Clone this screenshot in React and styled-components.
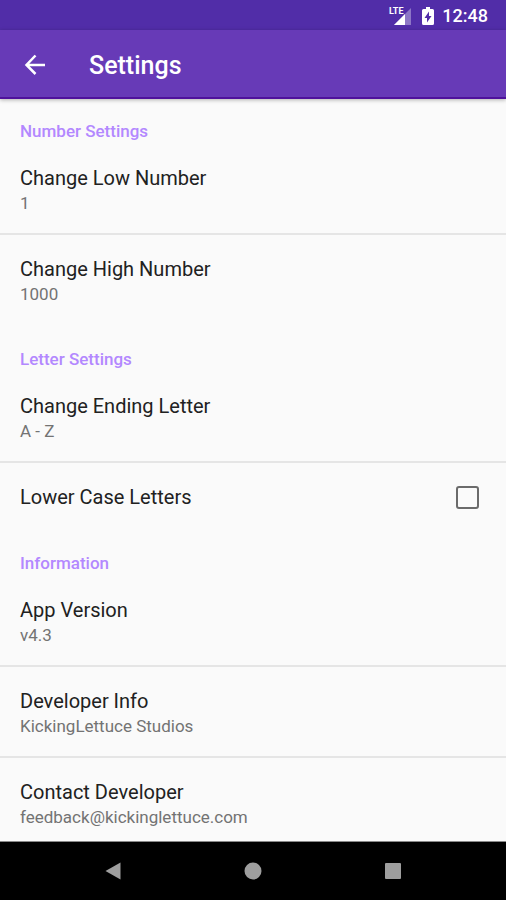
import React from "react";
import styled, { createGlobalStyle } from "styled-components";

const GlobalStyle = createGlobalStyle`
  *, *::before, *::after { box-sizing: border-box; }
  body {
    margin: 0;
    background: #fafafa;
    font-family: Roboto, "Liberation Sans", sans-serif;
  }
`;

const Screen = styled.div`
  height: 100vh;
  display: flex;
  flex-direction: column;
  background: #fafafa;
`;

const StatusBar = styled.div`
  display: flex;
  flex-shrink: 0;
  align-items: center;
  justify-content: flex-end;
  height: 30px;
  padding: 2px 18px 0 0;
  background: #512da8;
  color: #fff;
`;

const SignalIcon = styled.svg`
  width: 24px;
  height: 20px;
  margin-right: 10px;
`;

const BatteryIcon = styled.svg`
  width: 12px;
  height: 20px;
  margin-right: 8px;
`;

const Clock = styled.time`
  font-size: 18px;
  line-height: 20px;
  font-weight: 500;
`;

const Toolbar = styled.header`
  display: flex;
  flex-shrink: 0;
  align-items: center;
  height: 69px;
  padding: 2px 20px 0;
  background: #673ab7;
  border-bottom: 2px solid #4f129c;
  box-shadow: 0 1px 4px rgba(0, 0, 0, 0.3);
`;

const BackButton = styled.button`
  display: flex;
  width: 30px;
  height: 30px;
  margin-right: 39px;
  padding: 0;
  border: 0;
  background: none;
  color: #fff;
  cursor: pointer;
`;

const ScreenTitle = styled.h1`
  margin: 0;
  padding-top: 3px;
  color: #fff;
  font-size: 25px;
  line-height: 30px;
  font-weight: 500;
`;

const Content = styled.main`
  flex: 1;
  min-height: 0;
  overflow-y: auto;
  scrollbar-width: none;
`;

const SectionTitle = styled.h2`
  margin: 0;
  padding: 20px 20px 0;
  color: #b388ff;
  font-size: 17px;
  line-height: 24px;
  font-weight: 500;
`;

const List = styled.ul`
  margin: 0;
  padding: 0 0 3px;
  list-style: none;
`;

const Item = styled.li`
  & + & {
    border-top: 2px solid #e5e5e5;
  }
  & + & > * {
    padding-top: 21px;
  }
`;

const Preference = styled.button`
  display: block;
  width: 100%;
  padding: 22px 20px 18px;
  border: 0;
  background: none;
  font-family: inherit;
  text-align: left;
  cursor: pointer;
`;

const CheckPreference = styled.label`
  display: flex;
  align-items: center;
  justify-content: space-between;
  padding: 22px 27px 18px 20px;
  cursor: pointer;
`;

const Name = styled.span`
  display: block;
  color: #212121;
  font-size: 20px;
  line-height: 26px;
`;

const Value = styled.span`
  display: block;
  color: #737373;
  font-size: 17px;
  line-height: 24px;
`;

const Checkbox = styled.input`
  appearance: none;
  width: 23px;
  height: 23px;
  margin: 0;
  border: 2px solid #6b6b6b;
  border-radius: 3px;
  cursor: pointer;

  &:checked {
    background: #b388ff;
  }
`;

const NavBar = styled.nav`
  display: grid;
  flex-shrink: 0;
  grid-template-columns: repeat(3, 1fr);
  height: 59px;
  padding: 0 43px;
  border-top: 1px solid #8a8a8a;
  background: #000;
`;

const NavButton = styled.button`
  display: flex;
  align-items: center;
  justify-content: center;
  padding: 0;
  border: 0;
  background: none;
  color: #9e9e9e;
  cursor: pointer;
`;

const sections = [
  {
    title: "Number Settings",
    items: [
      { name: "Change Low Number", value: "1" },
      { name: "Change High Number", value: "1000" },
    ],
  },
  {
    title: "Letter Settings",
    items: [
      { name: "Change Ending Letter", value: "A - Z" },
      { name: "Lower Case Letters", checkbox: true },
    ],
  },
  {
    title: "Information",
    items: [
      { name: "App Version", value: "v4.3" },
      { name: "Developer Info", value: "KickingLettuce Studios" },
      { name: "Contact Developer", value: "feedback@kickinglettuce.com" },
    ],
  },
];

function PreferenceItem({ name, value, checkbox }) {
  return (
    <Item>
      {checkbox ? (
        <CheckPreference>
          <Name>{name}</Name>
          <Checkbox type="checkbox" />
        </CheckPreference>
      ) : (
        <Preference type="button">
          <Name>{name}</Name>
          <Value>{value}</Value>
        </Preference>
      )}
    </Item>
  );
}

export default function App() {
  return (
    <>
      <GlobalStyle />
      <Screen>
        <StatusBar>
          <SignalIcon viewBox="0 0 24 20" role="img" aria-label="LTE signal">
            <path d="M23 2V19H6Z" fill="#fff" fillOpacity="0.35" />
            <path d="M17 8V19H6Z" fill="#fff" />
            <text x="1" y="8" fill="#fff" fontSize="9" fontWeight="700" fontFamily="Roboto, sans-serif">
              LTE
            </text>
          </SignalIcon>
          <BatteryIcon viewBox="0 0 12 20" role="img" aria-label="Battery charging">
            <path d="M4 1h4v2h2.500a1.500 1.500 0 0 1 1.500 1.500v13a1.500 1.500 0 0 1-1.500 1.500h-9A1.500 1.500 0 0 1 0 17.500v-13A1.500 1.500 0 0 1 1.500 3H4Z" fill="#fff" />
            <path d="M7 5.500V10h2.500L5 16.500V12H2.500Z" fill="#512da8" />
          </BatteryIcon>
          <Clock>12:48</Clock>
        </StatusBar>
        <Toolbar>
          <BackButton type="button" aria-label="Back">
            <svg width="30" height="30" viewBox="0 0 30 30" fill="none" stroke="currentColor" strokeWidth="2.500">
              <path d="M25 15H7M15.500 5.500L6.500 15l9 9" />
            </svg>
          </BackButton>
          <ScreenTitle>Settings</ScreenTitle>
        </Toolbar>
        <Content>
          {sections.map((section) => (
            <section key={section.title}>
              <SectionTitle>{section.title}</SectionTitle>
              <List>
                {section.items.map((item) => (
                  <PreferenceItem key={item.name} {...item} />
                ))}
              </List>
            </section>
          ))}
        </Content>
        <NavBar aria-label="System">
          <NavButton type="button" aria-label="Back">
            <svg width="18" height="18" viewBox="0 0 18 18" fill="currentColor">
              <path d="M16.500 0.500V17.500L1.500 9Z" />
            </svg>
          </NavButton>
          <NavButton type="button" aria-label="Home">
            <svg width="18" height="18" viewBox="0 0 18 18" fill="currentColor">
              <circle cx="9" cy="9" r="8.500" />
            </svg>
          </NavButton>
          <NavButton type="button" aria-label="Recent apps">
            <svg width="18" height="18" viewBox="0 0 18 18" fill="currentColor">
              <rect x="1" y="1" width="16" height="16" rx="1" />
            </svg>
          </NavButton>
        </NavBar>
      </Screen>
    </>
  );
}
